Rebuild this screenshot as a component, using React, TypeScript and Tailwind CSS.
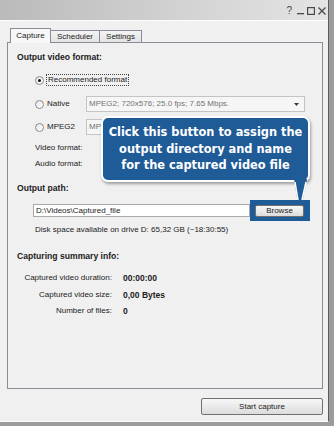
import React from "react";

function Radio({ checked }: { checked?: boolean }) {
  return (
    <div className="w-[9px] h-[9px] shrink-0 rounded-full border border-[#8c8c8c] bg-[linear-gradient(135deg,#e4e4e4,#ffffff)] flex items-center justify-center">
      {checked && <div className="w-[3px] h-[3px] rounded-full bg-[#111111]" />}
    </div>
  );
}

function Combo({ text }: { text: string }) {
  return (
    <div className="w-[219px] h-[16px] border border-[#c4c4c4] bg-[#f6f6f6] flex items-center justify-between pl-[2px] pr-[5px] text-[#727272]">
      <span>{text}</span>
      <svg width="5" height="3" viewBox="0 0 5 3">
        <polygon points="0,0 5,0 2.5,3" fill="#3a3a3a" />
      </svg>
    </div>
  );
}

export default function App() {
  return (
    <div className="relative w-[334px] h-[426px] overflow-hidden bg-[#9c9c9c] font-['Liberation_Sans',Arial,sans-serif] text-[8px] leading-[10px] text-[#1b1b1b]">
      <div className="flex flex-col w-[329px] h-[422px] bg-[#f0f0f0] border-r border-b border-r-[#5c5c5c] border-b-white">
        {/* title bar */}
        <div className="h-[20px] shrink-0 flex items-center justify-end pr-[2px] gap-[3px] bg-[linear-gradient(to_right,#bababa,#d2d2d2_55%,#e4e4e4)] text-[#4a4a4a]">
          <span className="text-[10px] leading-[10px] mr-[2px] mt-[2px]">?</span>
          <svg width="7" height="10" viewBox="0 0 7 10">
            <rect x="0" y="8" width="7" height="1.3" fill="#4a4a4a" />
          </svg>
          <svg width="8" height="10" viewBox="0 0 8 10">
            <rect x="0.6" y="2.6" width="6.8" height="6.8" fill="none" stroke="#4a4a4a" strokeWidth="1.2" />
          </svg>
          <svg width="8" height="10" viewBox="0 0 8 10">
            <path d="M0.5 2.5 L7.5 9.5 M7.5 2.5 L0.5 9.5" stroke="#4a4a4a" strokeWidth="1.3" />
          </svg>
        </div>
        <div className="h-px shrink-0 bg-white" />

        <div className="flex flex-col pl-[7px] pr-[5px] pt-[7px]">
          {/* tabs */}
          <div className="h-[15px] flex items-start pl-[3px]">
            <div className="relative z-10 w-[41px] h-[15px] border border-b-0 border-[#898c95] bg-[#f7f7f7] flex items-center justify-center pb-[1px]">
              Capture
            </div>
            <div className="mt-[2px] w-[49px] h-[13px] border border-b-0 border-l-0 border-[#898c95] bg-[linear-gradient(#f4f4f4,#e2e2e2)] flex items-center justify-center">
              Scheduler
            </div>
            <div className="mt-[2px] w-[42px] h-[13px] border border-b-0 border-l-0 border-[#898c95] bg-[linear-gradient(#f4f4f4,#e2e2e2)] flex items-center justify-center">
              Settings
            </div>
          </div>

          {/* panel */}
          <div className="-mt-px h-[347px] border border-[#898c95] bg-[#f0f0f0] flex flex-col">
            <div className="mt-[7px] h-[14px] ml-[9px] flex items-center font-bold text-[8.6px]">
              Output video format:
            </div>
            <div className="mt-[8px] h-[16px] ml-[27px] flex items-center">
              <Radio checked />
              <span className="ml-[2px] px-[1px] border border-dotted border-[#444444] leading-[10px]">
                Recommended format
              </span>
            </div>
            <div className="mt-[8px] h-[16px] ml-[27px] flex items-center">
              <div className="w-[51px] flex items-center">
                <Radio />
                <span className="ml-[3px]">Native</span>
              </div>
              <Combo text="MPEG2; 720x576; 25.0 fps; 7.65 Mbps." />
            </div>
            <div className="mt-[7px] h-[16px] ml-[27px] flex items-center">
              <div className="w-[51px] flex items-center">
                <Radio />
                <span className="ml-[3px]">MPEG2</span>
              </div>
              <Combo text="MPEG2; 720x576; 25.0 fps; 7.65 Mbps." />
            </div>
            <div className="mt-[7px] h-[12px] ml-[27px] flex items-center">Video format:</div>
            <div className="mt-[4px] h-[12px] ml-[27px] flex items-center">Audio format:</div>

            <div className="mt-[11px] h-[14px] ml-[9px] flex items-center font-bold text-[8.6px]">
              Output path:
            </div>
            <div className="mt-[5px] h-[21px] ml-[25px] flex items-center">
              <div className="w-[217px] h-[13px] border border-[#a9a9a9] bg-white flex items-center pl-[2px]">
                D:\Videos\Captured_file
              </div>
              <div className="w-[60px] h-[21px] bg-[#1f5b97] flex items-center pl-[5px]">
                <div className="w-[49px] h-[12px] border border-[#707070] rounded-[2px] bg-[linear-gradient(#f7f7f7,#dddddd)] flex items-center justify-center">
                  Browse
                </div>
              </div>
            </div>
            <div className="mt-[3px] h-[12px] ml-[27px] flex items-center">
              Disk space available on drive D: 65,32 GB (~18:30:55)
            </div>

            <div className="mt-[13px] h-[14px] ml-[9px] flex items-center font-bold text-[8.6px]">
              Capturing summary info:
            </div>
            <div className="mt-[9px] h-[12px] flex items-center">
              <span className="w-[104px] text-right">Captured video duration:</span>
              <span className="ml-[11px] font-bold text-[8.5px]">00:00:00</span>
            </div>
            <div className="mt-[5px] h-[12px] flex items-center">
              <span className="w-[104px] text-right">Captured video size:</span>
              <span className="ml-[11px] font-bold text-[8.5px]">0,00 Bytes</span>
            </div>
            <div className="mt-[4px] h-[12px] flex items-center">
              <span className="w-[104px] text-right">Number of files:</span>
              <span className="ml-[11px] font-bold text-[8.5px]">0</span>
            </div>
          </div>

          <div className="mt-[9px] flex justify-end">
            <div className="w-[122px] h-[17px] border border-[#707070] rounded-[2px] bg-[linear-gradient(#f7f7f7,#dcdcdc)] flex items-center justify-center">
              Start capture
            </div>
          </div>
        </div>
      </div>

      {/* callout tooltip */}
      <div className="absolute left-[101px] top-[116px] w-[209px] h-[66px] rounded-[7px] border-2 border-white bg-[#1f5b97] shadow-[1px_2px_3px_rgba(0,0,0,0.35)] flex flex-col items-center justify-center font-['DejaVu_Sans',Verdana,sans-serif] font-bold text-[11.4px] leading-[16.5px] text-white">
        <span>Click this button to assign the</span>
        <span>output directory and name</span>
        <span>for the captured video file</span>
      </div>
      <svg className="absolute left-[290px] top-[179px]" width="20" height="22" viewBox="0 0 20 22">
        <polygon points="4,0 17,0 12.5,22 7.5,22" fill="#1f5b97" />
        <path d="M5 3 L8 21 M16 3 L12 21" stroke="#ffffff" strokeWidth="1.5" fill="none" />
      </svg>
    </div>
  );
}
